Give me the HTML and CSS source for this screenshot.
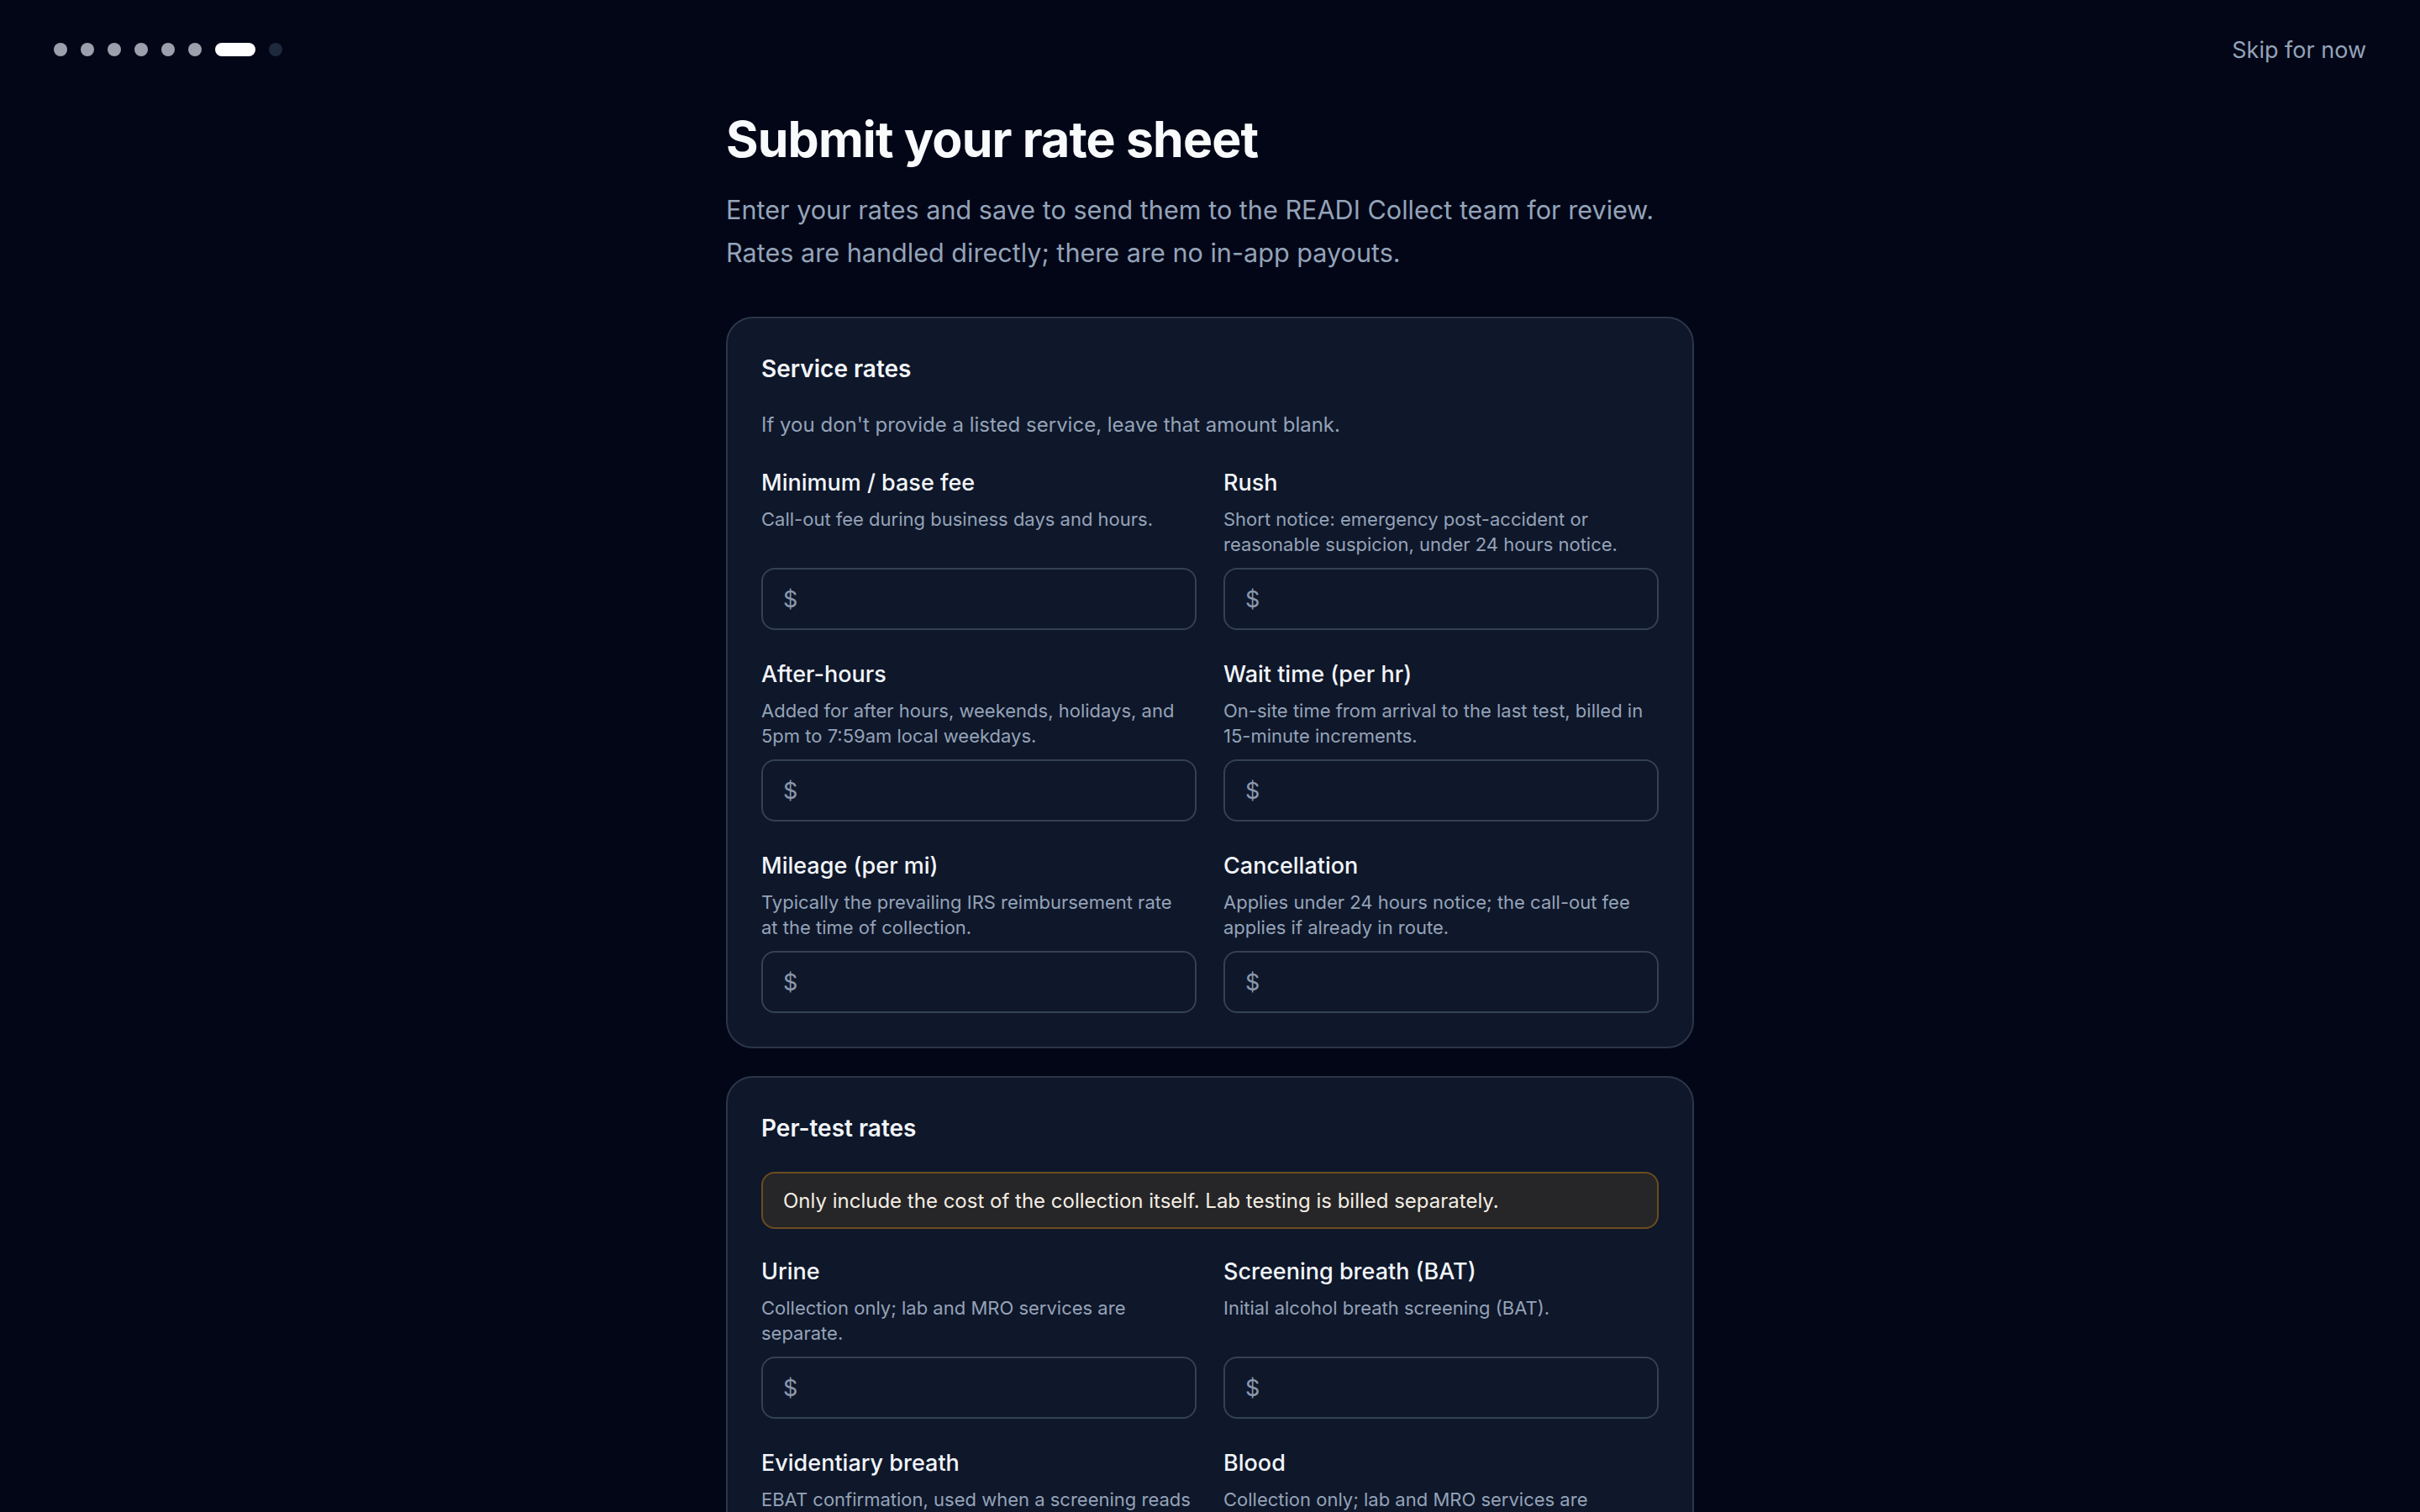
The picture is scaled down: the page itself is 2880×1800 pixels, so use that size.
FILE: index.html
```html
<!DOCTYPE html>
<html lang="en">
<head>
<meta charset="utf-8">
<title>Submit your rate sheet</title>
<link rel="stylesheet" href="styles.css">
</head>
<body>
<header class="topbar">
  <div class="steps">
    <span class="dot done"></span>
    <span class="dot done"></span>
    <span class="dot done"></span>
    <span class="dot done"></span>
    <span class="dot done"></span>
    <span class="dot done"></span>
    <span class="dot active"></span>
    <span class="dot todo"></span>
  </div>
  <a class="skip" href="#">Skip for now</a>
</header>

<main class="page">
  <h1 class="title">Submit your rate sheet</h1>
  <p class="lead">Enter your rates and save to send them to the READI Collect team for review. Rates are handled directly; there are no in-app payouts.</p>

  <section class="card">
    <h2 class="card-title">Service rates</h2>
    <p class="card-note">If you don't provide a listed service, leave that amount blank.</p>
    <div class="fields">
      <div class="field">
        <div class="label">Minimum / base fee</div>
        <div class="help">Call-out fee during business days and hours.</div>
        <label class="money"><span class="cur">$</span><input type="text"></label>
      </div>
      <div class="field">
        <div class="label">Rush</div>
        <div class="help">Short notice: emergency post-accident or reasonable suspicion, under 24 hours notice.</div>
        <label class="money"><span class="cur">$</span><input type="text"></label>
      </div>
      <div class="field">
        <div class="label">After-hours</div>
        <div class="help">Added for after hours, weekends, holidays, and 5pm to 7:59am local weekdays.</div>
        <label class="money"><span class="cur">$</span><input type="text"></label>
      </div>
      <div class="field">
        <div class="label">Wait time (per hr)</div>
        <div class="help">On-site time from arrival to the last test, billed in 15-minute increments.</div>
        <label class="money"><span class="cur">$</span><input type="text"></label>
      </div>
      <div class="field">
        <div class="label">Mileage (per mi)</div>
        <div class="help">Typically the prevailing IRS reimbursement rate<br>at the time of collection.</div>
        <label class="money"><span class="cur">$</span><input type="text"></label>
      </div>
      <div class="field">
        <div class="label">Cancellation</div>
        <div class="help">Applies under 24 hours notice; the call-out fee applies if already in route.</div>
        <label class="money"><span class="cur">$</span><input type="text"></label>
      </div>
    </div>
  </section>

  <section class="card">
    <h2 class="card-title">Per-test rates</h2>
    <div class="notice">Only include the cost of the collection itself. Lab testing is billed separately.</div>
    <div class="fields">
      <div class="field">
        <div class="label">Urine</div>
        <div class="help">Collection only; lab and MRO services are separate.</div>
        <label class="money"><span class="cur">$</span><input type="text"></label>
      </div>
      <div class="field">
        <div class="label">Screening breath (BAT)</div>
        <div class="help">Initial alcohol breath screening (BAT).</div>
        <label class="money"><span class="cur">$</span><input type="text"></label>
      </div>
      <div class="field">
        <div class="label">Evidentiary breath</div>
        <div class="help">EBAT confirmation, used when a screening reads 0.02 or higher.</div>
        <label class="money"><span class="cur">$</span><input type="text"></label>
      </div>
      <div class="field">
        <div class="label">Blood</div>
        <div class="help">Collection only; lab and MRO services are separate.</div>
        <label class="money"><span class="cur">$</span><input type="text"></label>
      </div>
    </div>
  </section>
</main>
</body>
</html>
```

FILE: styles.css
```css
* { box-sizing: border-box; }

html, body {
  margin: 0;
  padding: 0;
}

body {
  background: #020617;
  color: #f8fafc;
  font-family: Inter, "Noto Sans", "Liberation Sans", sans-serif;
  -webkit-font-smoothing: antialiased;
}

.topbar {
  height: 118px;
  padding: 0 64px;
  display: flex;
  align-items: center;
  justify-content: space-between;
}

.steps {
  display: flex;
  align-items: center;
  gap: 16px;
}

.dot {
  display: block;
  width: 16px;
  height: 16px;
  border-radius: 8px;
}

.dot.done { background: #9ca0ad; }
.dot.active { width: 48px; background: #ffffff; }
.dot.todo { background: #1e293b; }

.skip {
  font-size: 27px;
  line-height: 36px;
  margin-top: 2px;
  color: #94a3b8;
  text-decoration: none;
}

.page {
  width: 1152px;
  margin: 0 auto;
  padding: 13px 0 80px;
}

.title {
  margin: 0;
  font-size: 59px;
  line-height: 70px;
  font-weight: 700;
  letter-spacing: -0.015em;
  color: #f8fafc;
}

.lead {
  margin: 23px 0 0;
  font-size: 30.6px;
  line-height: 51px;
  color: #94a3b8;
}

.card {
  margin-top: 51px;
  background: #0f172a;
  border: 2px solid #2b3648;
  border-radius: 32px;
  padding: 40px;
}

.card + .card { margin-top: 33px; }

.card-title {
  margin: 0;
  font-size: 28px;
  line-height: 40px;
  font-weight: 600;
  color: #f1f5f9;
}

.card-note {
  margin: 30px 0 0;
  font-size: 24px;
  line-height: 34px;
  color: #94a3b8;
}

.notice {
  margin-top: 32px;
  background: #262527;
  border: 2px solid #6b4d1e;
  border-radius: 16px;
  padding: 0 24px;
  height: 68px;
  display: flex;
  align-items: center;
  font-size: 24px;
  color: #f3eee4;
}

.fields {
  margin-top: 33px;
  display: grid;
  grid-template-columns: 1fr 1fr;
  column-gap: 32px;
  row-gap: 34px;
}

.notice + .fields { margin-top: 32px; }

.field {
  display: flex;
  flex-direction: column;
}

.label {
  font-size: 27px;
  line-height: 38px;
  font-weight: 500;
  color: #f1f5f9;
}

.help {
  margin-top: 9px;
  margin-bottom: 13px;
  font-size: 22px;
  line-height: 30px;
  color: #94a3b8;
}

.money {
  margin-top: auto;
  height: 74px;
  display: flex;
  align-items: center;
  gap: 12px;
  padding: 0 24px;
  border: 2px solid #334155;
  border-radius: 16px;
  background: #0f172a;
}

.cur {
  font-size: 27px;
  color: #8b98ad;
}

.money input {
  flex: 1;
  min-width: 0;
  height: 100%;
  border: 0;
  outline: 0;
  background: transparent;
  color: #f1f5f9;
  font: inherit;
  font-size: 26px;
  padding: 0;
}
```
